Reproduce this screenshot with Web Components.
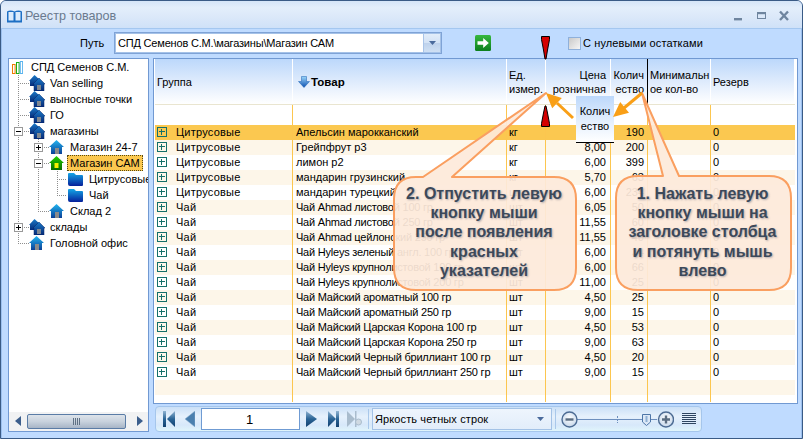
<!DOCTYPE html>
<html lang="ru"><head><meta charset="utf-8"><title>Реестр товаров</title>
<style>html,body{margin:0;padding:0;background:#fff;overflow:hidden}</style></head>
<body>
<app-window>
  <title-bar slot="title">Реестр товаров</title-bar>
  <path-bar slot="bar"></path-bar>
  <tree-panel slot="tree">
    <tree-node icon="bars" w="3">СПД Семенов С.М.</tree-node>
    <tree-node icon="double" w="20" lines="V18 H18-29">Van selling</tree-node>
    <tree-node icon="double" w="20" lines="V18 H18-29">выносные точки</tree-node>
    <tree-node icon="double" w="20" lines="V18 H18-29">ГО</tree-node>
    <tree-node icon="double" w="20" lines="V18 H18-29" exp="minus" ex="18">магазины</tree-node>
    <tree-node icon="house" w="40" lines="V18 V38 H38-49" exp="plus" ex="38">Магазин 24-7</tree-node>
    <tree-node icon="green" w="40" lines="V18 V38 H38-49" exp="minus" ex="38" selected>Магазин САМ</tree-node>
    <tree-node icon="folder" w="59" lines="V18 V38 V57 H57-67">Цитрусовые</tree-node>
    <tree-node icon="folder" w="59" lines="V18 V38 L57 H57-67">Чай</tree-node>
    <tree-node icon="house" w="40" lines="V18 L38 H38-49">Склад 2</tree-node>
    <tree-node icon="double" w="20" lines="V18 H18-29" exp="plus" ex="18">склады</tree-node>
    <tree-node icon="house" w="20" lines="L18 H18-29">Головной офис</tree-node>
  </tree-panel>
  <data-grid slot="grid"></data-grid>
  <pager-bar slot="pager"></pager-bar>
  <tutorial-layer slot="layer"></tutorial-layer>
</app-window>
<script>
const FONT = '"Liberation Sans", Arial, sans-serif';
function shadow(el, css, html){
  const r = el.shadowRoot || el.attachShadow({mode:'open'});
  r.innerHTML = '<style>'+css+'</style>'+html;
  return r;
}
customElements.define('app-window', class extends HTMLElement{
  connectedCallback(){ shadow(this, `
    :host{display:flex;flex-direction:column;position:relative;box-sizing:border-box;width:803px;height:439px;
      border:1px solid #3a5b86;border-radius:6px 6px 0 0;background:#bfdbff;font:11px ${FONT};color:#000;overflow:hidden;
      box-shadow:inset 1px 0 0 #9cc0ee, inset -1px 0 0 #9cc0ee}
    .main{flex:1;display:flex;gap:4px;padding:0 4px 0 7px;min-height:0}
    .right{display:flex;flex-direction:column;gap:2px;width:645px}
    .left{display:flex;width:141px;height:374px}
  `, `<slot name="title"></slot><slot name="bar"></slot>
    <div class="main"><div class="left"><slot name="tree"></slot></div>
    <div class="right"><slot name="grid"></slot><slot name="pager"></slot></div></div>
    <slot name="layer"></slot>`); }
});
customElements.define('title-bar', class extends HTMLElement{
  connectedCallback(){ shadow(this, `
    :host{display:flex;align-items:center;box-sizing:border-box;height:28px;padding:3px 0 0 5px;flex:none;
      background:linear-gradient(#d5e5f8,#e3eefb 25%,#dbe8f9 60%,#cfe1f8);border-bottom:1px solid #a4c7f0;font:12.6px ${FONT};color:#6a7a8e}
    .t{margin-left:2px}
    .btns{margin-left:auto;display:flex;align-items:center;gap:0;padding-right:11px}
    svg{display:block}
  `, `<svg width="17" height="15" viewBox="0 0 17 15"><path d="M1 2.5C3 1 6 1 8.5 2.500C11 1 14 1 16 2.500V13.500H1Z" fill="#1d6fc4"/><rect x="2.500" y="3" width="5" height="8.500" fill="#dcecfc"/><rect x="9.500" y="3" width="5" height="8.500" fill="#dcecfc"/></svg>
    <span class="t"><slot></slot></span>
    <div class="btns"><svg width="60" height="12" viewBox="0 0 60 12">
      <rect x="3" y="8" width="8" height="2.400" fill="#6f859f"/>
      <rect x="26.500" y="2.500" width="8" height="6" fill="none" stroke="#6f859f" stroke-width="1"/><rect x="26" y="2" width="9" height="2.200" fill="#6f859f"/>
      <path d="M49 1.500L57 10M57 1.500L49 10" stroke="#6f859f" stroke-width="2.400" fill="none"/>
    </svg></div>`); }
});
customElements.define('path-bar', class extends HTMLElement{
  connectedCallback(){ shadow(this, `
    :host{display:flex;align-items:center;box-sizing:border-box;height:29px;flex:none;padding:0 0 1px 79px;font:11px ${FONT}}
    .lbl{width:34px}
    .input{box-sizing:border-box;width:328px;height:22px;border:1px solid #7fa3d6;outline:1px solid #a5c2e8;outline-offset:-2px;background:#fff;display:flex;align-items:center;padding-left:3px;white-space:nowrap;overflow:hidden;position:relative}
    .txt{flex:1;letter-spacing:-.017em}
    .dd{width:16px;align-self:stretch;background:linear-gradient(#e2edfa,#d3e2f5 50%,#bed2ec 52%,#cfe0f4);display:flex;align-items:center;justify-content:center;border-left:1px solid #a9c4e8;margin:1px}
    .go{margin-left:33px;display:block}
    .cb{margin-left:77px;box-sizing:border-box;width:13px;height:13px;border:1px solid #8fb0da;background:linear-gradient(135deg,#c9c9c9,#f6f6f6);}
    .cl{margin-left:2px;letter-spacing:.01em;white-space:nowrap}
  `, `<span class="lbl">Путь</span>
    <div class="input"><span class="txt">СПД Семенов С.М.\\магазины\\Магазин САМ</span>
      <span class="dd"><svg width="7" height="4" viewBox="0 0 7 4"><path d="M0 0H7L3.500 4Z" fill="#4a6a9c"/></svg></span></div>
    <svg class="go" width="16" height="16" viewBox="0 0 16 16"><defs><linearGradient id="g" x1="0" y1="0" x2="0" y2="1"><stop offset="0" stop-color="#38b83f"/><stop offset="1" stop-color="#0c7f1e"/></linearGradient></defs><rect width="16" height="16" rx="1.500" fill="url(#g)"/><path d="M2.500 6.300H8.200V3L13.800 8L8.200 13V9.700H2.500Z" fill="#fff"/></svg>
    <span class="cb"></span><span class="cl">С нулевыми остатками</span>`); }
});
customElements.define('tree-panel', class extends HTMLElement{
  connectedCallback(){ shadow(this, `
    :host{display:flex;flex-direction:column;box-sizing:border-box;width:141px;height:374px;border:1px solid #7199d2;background:#fff;overflow:hidden}
    .items{flex:1;min-height:0;overflow:hidden}
    .sb{height:18px;flex:none;background:#f1f2f3;display:flex;align-items:center;padding-bottom:1px}
    svg{display:block;flex:none}
    .l{margin-left:6px}
    .th{margin-left:5px;box-sizing:border-box;width:99px;height:15px;border:1px solid #5a7ca6;border-radius:2px;background:linear-gradient(#dde3ea,#c8d2dd 50%,#a7b5c6);display:flex;align-items:center;justify-content:center}
    .r{margin-left:11px}
  `, `<div class="items"><slot></slot></div>
   <div class="sb"><svg class="l" width="7" height="10" viewBox="0 0 7 10"><path d="M6 0V10L0 5Z" fill="#3c5e8c"/></svg>
   <div class="th"><svg width="8" height="7" viewBox="0 0 8 7"><path d="M.5 0V7M2.500 0V7M4.500 0V7M6.500 0V7" stroke="#5f7184" stroke-width="1"/></svg></div>
   <svg class="r" width="6" height="10" viewBox="0 0 6 10"><path d="M0 0V10L6 5Z" fill="#3c5e8c"/></svg></div>`); }
});
const GRAD = (a,b)=>`<defs><linearGradient id="i" x1="0" y1="0" x2="0" y2="1"><stop offset="0" stop-color="${a}"/><stop offset="1" stop-color="${b}"/></linearGradient></defs>`;
const HOUSE = 'M7.500 1L15 8H13V15H2V8H0Z';
const ICONS = {
  bars:`<svg width="11" height="16" viewBox="0 0 11 16"><rect x=".5" y="5.500" width="2.600" height="9" fill="#fff" stroke="#f07a00"/><rect x="4.500" y="3.500" width="2.600" height="11" fill="#fff" stroke="#19b019"/><rect x="8.300" y="2.500" width="2.300" height="12" fill="#fff" stroke="#5ab4ee"/></svg>`,
  double:`<svg width="16" height="16" viewBox="0 0 16 16">${GRAD('#1a7ac8','#062a78')}<path d="M5.500 0L11 5V11H1V6H0Z" fill="url(#i)"/><path d="M10 3L16 9H15V16H5V9H4Z" fill="url(#i)" stroke="#06256b" stroke-width=".5"/><rect x="8" y="10" width="4" height="5" fill="#7f8790"/></svg>`,
  house:`<svg width="15" height="16" viewBox="0 0 15 16">${GRAD('#22b5f0','#0a3f96')}<path d="${HOUSE}" fill="url(#i)"/><rect x="6" y="9" width="4" height="6" fill="#8b8b8b"/></svg>`,
  green:`<svg width="15" height="16" viewBox="0 0 15 16">${GRAD('#22d000','#066b00')}<path d="${HOUSE}" fill="url(#i)"/><rect x="5.500" y="8" width="4" height="5" fill="#f6f000"/></svg>`,
  folder:`<svg width="15" height="16" viewBox="0 0 15 16">${GRAD('#14a6e6','#06209a')}<path d="M1 2H6L8 4H14Q15 4 15 5V14Q15 15 14 15H2Q0 15 0 13V3Q0 2 1 2Z" fill="url(#i)"/></svg>`
};
function guides(spec, exp, ex){
  let s='';
  (spec||'').split(' ').filter(Boolean).forEach(t=>{
    const k=t[0], v=t.slice(1);
    if(k==='V'){const x=+v-9+.5; s+=`<path d="M${x} 0V16"/>`;}
    if(k==='L'){const x=+v-9+.5; s+=`<path d="M${x} 0V8"/>`;}
    if(k==='H'){const [a,b]=v.split('-').map(n=>+n-9); s+=`<path d="M${a} 8.500H${b}"/>`;}
  });
  let e='';
  if(exp){const c=+ex-9; e=`<rect x="${c-4+.5}" y="4.500" width="8" height="8" fill="#fff" stroke="#999"/><path d="M${c-2} 8.500H${c+3}" stroke="#000"/>`+(exp==='plus'?`<path d="M${c+.5} 6V11" stroke="#000"/>`:'');}
  return `<g fill="none" stroke="#8e8e8e" stroke-dasharray="1 1" shape-rendering="crispEdges">${s}</g><g shape-rendering="crispEdges">${e}</g>`;
}
customElements.define('tree-node', class extends HTMLElement{
  connectedCallback(){
    const w=+this.getAttribute('w')||0, ic=this.getAttribute('icon');
    const sel=this.hasAttribute('selected');
    const gap = ic==='bars'?8: ic==='double'?5: 6;
    shadow(this, `
      :host{display:flex;align-items:center;height:16px;white-space:nowrap;font:11px ${FONT}}
      svg{display:block;flex:none}
      .lab{margin-left:${sel?3:gap}px;${sel?'box-sizing:border-box;height:16px;line-height:14px;padding:0 2px;background:#fbc850;border:1px dotted #5a4a10;':''}}
    `, `<svg width="${w}" height="16" viewBox="0 0 ${w} 16">${guides(this.getAttribute('lines'),this.getAttribute('exp'),this.getAttribute('ex'))}</svg>${ICONS[ic]}<span class="lab"><slot></slot></span>`);
  }
});
const ROWS = [
 ['Цитрусовые','Апельсин марокканский','кг','','190','0'],
 ['Цитрусовые','Грейпфрут р3','кг','8,00','200','0'],
 ['Цитрусовые','лимон р2','кг','6,00','399','0'],
 ['Цитрусовые','мандарин грузинский','кг','5,70','63','0'],
 ['Цитрусовые','мандарин турецкий','шт','6,00','234','0'],
 ['Чай','Чай Ahmad листовой 100 гр','шт','6,05','50','0'],
 ['Чай','Чай Ahmad листовой 250 гр','шт','11,55','60','0'],
 ['Чай','Чай Ahmad цейлонский 250 гр','шт','11,55','40','0'],
 ['Чай','Чай Hyleys зеленый англ. 100 гр','шт','6,00','34','0'],
 ['Чай','Чай Hyleys крупнолистовой 100 гр','шт','6,00','66','0'],
 ['Чай','Чай Hyleys крупнолистовой 200 гр','шт','11,00','25','0'],
 ['Чай','Чай Майский ароматный 100 гр','шт','4,50','25','0'],
 ['Чай','Чай Майский ароматный 250 гр','шт','9,00','15','0'],
 ['Чай','Чай Майский Царская Корона 100 гр','шт','4,50','53','0'],
 ['Чай','Чай Майский Царская Корона 250 гр','шт','9,00','63','0'],
 ['Чай','Чай Майский Черный бриллиант 100 гр','шт','4,50','20','0'],
 ['Чай','Чай Майский Черный бриллиант 250 гр','шт','9,00','15','0'],
 ['','','','','','']
];
customElements.define('grid-row', class extends HTMLElement{
  connectedCallback(){
    const c=JSON.parse(this.getAttribute('cells'));
    const h=this.getAttribute('h')||15;
    const exp = c[0]?`<svg width="10" height="10" viewBox="0 0 10 10"><rect x=".5" y=".5" width="9" height="9" fill="none" stroke="#14706a" shape-rendering="crispEdges"/><path d="M2 4.500H8M4.500 2V8" stroke="#14706a" shape-rendering="crispEdges"/></svg>`:'';
    const tight = c[0]==='Чай' ? 'letter-spacing:-.02em;' : '';
    shadow(this, `
      :host{display:grid;grid-template-columns:var(--cols);height:${h}px;background:${this.getAttribute('bg')||'#fff'};font:11px ${FONT}}
      div{box-sizing:border-box;border-right:1px solid #fcc64f;padding:0 3px 1px;white-space:nowrap;overflow:hidden;display:flex;align-items:center;height:${h}px}
      div:last-child{border-right:0}
      .g{padding-left:2px;letter-spacing:.02em}
      .g svg{margin-right:9px;flex:none;display:block}
      .n{justify-content:flex-end}
    `, `<div class="g">${exp}${c[0]}</div><div style="${tight}">${c[1]}</div><div style="padding-left:2px">${c[2]}</div><div class="n" style="padding-right:4px">${c[3]}</div><div class="n">${c[4]}</div><div></div><div style="padding-left:2px">${c[5]}</div>`);
  }
});
customElements.define('header-cell', class extends HTMLElement{
  connectedCallback(){
    const a=this.getAttribute('align')||'left';
    const pl=this.getAttribute('pl')||2, pr=this.getAttribute('pr')||3;
    shadow(this, `
      :host{display:flex;align-items:center;box-sizing:border-box;height:45px;padding:0 ${pr}px 0 ${pl}px;border-right:1px solid ${this.hasAttribute('mark')?'#000':'#fff'};
        justify-content:${a==='right'?'flex-end':'flex-start'};text-align:${a};line-height:14px;white-space:nowrap;overflow:hidden}
    `,`<span><slot></slot></span>`);
  }
});
customElements.define('data-grid', class extends HTMLElement{
  connectedCallback(){
    const arrow=`<svg width="12" height="12" viewBox="0 0 12 12" style="vertical-align:-2px;margin-right:1px"><defs><linearGradient id="a" x1="0" y1="0" x2="0" y2="1"><stop offset="0" stop-color="#9bd6fb"/><stop offset="1" stop-color="#0b4fb0"/></linearGradient></defs><path d="M3.500 .5H8.500V5.500H11.500L6 11.500L.5 5.500H3.500Z" fill="url(#a)" stroke="#1a5fb0" stroke-width=".5"/></svg>`;
    const esc=s=>s.replace(/"/g,'&quot;');
    const rows=ROWS.map((r,i)=>`<grid-row bg="${i===0?'#fbc850':(i%2?'#fdf6e9':'#fff')}" cells="${esc(JSON.stringify(r))}"></grid-row>`).join('');
    shadow(this, `
      :host{display:block;box-sizing:border-box;width:645px;height:346px;border:1px solid #7199d2;background:#fff;padding:0 2px 0 1px;
        --cols:138px 214px 39px 65px 37px 63px 84px;font:11px ${FONT}}
      .head{display:grid;grid-template-columns:var(--cols);height:46px;box-sizing:border-box;border-bottom:1px solid #e9e5d0;background:linear-gradient(#bcd8fb,#dbe9fc 45%,#fff)}
      b{font-size:11.5px}
    `, `<div class="head">
        <header-cell>Группа</header-cell>
        <header-cell pl="5">${arrow}<b>Товар</b></header-cell>
        <header-cell>Ед.<br>измер.</header-cell>
        <header-cell align="right" pr="4">Цена<br>розничная</header-cell>
        <header-cell align="right" mark>Колич<br>ество</header-cell>
        <header-cell>Минимальн<br>ое кол-во</header-cell>
        <header-cell>Резерв</header-cell>
      </div>
      <grid-row h="20" cells='["","","","","",""]'></grid-row>
      ${rows}
      <grid-row h="7" cells='["","","","","",""]'></grid-row>`);
  }
});
customElements.define('pager-bar', class extends HTMLElement{
  connectedCallback(){
    const g=`<defs><linearGradient id="p" x1="0" y1="0" x2="0" y2="1"><stop offset="0" stop-color="#8fb3d2"/><stop offset=".5" stop-color="#2a6496"/><stop offset="1" stop-color="#12406f"/></linearGradient></defs>`;
    shadow(this, `
      :host{display:flex;align-items:center;box-sizing:border-box;width:547px;height:26px;margin-left:2px;padding-left:7px;border:1px solid #a5c6ec;border-radius:4px;
        background:linear-gradient(#cbe0f7,#e6f1fc 40%,#d7e8fa 75%,#e0f5fb);font:11px ${FONT}}
      svg{display:block;flex:none}
      .box{box-sizing:border-box;height:22px;border:1px solid #6f9bd3;background:#fff;display:flex;align-items:center;flex:none}
      .page{width:99px;margin:0 6px;justify-content:center;font-size:13px;padding-right:2px}
      .sep{width:1px;height:20px;background:#a9c8ea;flex:none}
      .combo{width:180px;margin:0 3px;padding-left:2px;border-color:#a3c2e6;background:linear-gradient(#eef5fd,#e2edfa);letter-spacing:.01em}
      .combo span{flex:1}
      .combo svg{margin-right:7px}
    `, `
    <svg width="12" height="16" viewBox="0 0 12 16">${g}<rect width="3" height="16" fill="url(#p)"/><path d="M12 0V16L4 8Z" fill="url(#p)"/></svg>
    <svg style="margin-left:10px" width="10" height="16" viewBox="0 0 10 16"><path d="M10 0V16L0 8Z" fill="#4a7fae" stroke="#8fb3d2" stroke-width=".5"/></svg>
    <div class="box page">1</div>
    <svg width="11" height="16" viewBox="0 0 11 16">${g}<path d="M0 0V16L11 8Z" fill="url(#p)"/></svg>
    <svg style="margin-left:11px" width="11" height="16" viewBox="0 0 11 16">${g}<path d="M0 0V16L8 8Z" fill="url(#p)"/><rect x="8" width="3" height="16" fill="url(#p)"/></svg>
    <svg style="margin:0 6px 0 8px" width="15" height="16" viewBox="0 0 15 16"><path d="M0 0V16L8 8Z" fill="#a9bccd"/><rect x="8" width="1.500" height="16" fill="#a9bccd"/><circle cx="11.500" cy="11" r="3" fill="#cfd9e2" stroke="#a9bccd"/></svg>
    <div class="sep"></div>
    <div class="box combo"><span>Яркость четных строк</span><svg width="7" height="4" viewBox="0 0 7 4"><path d="M0 0H7L3.500 4Z" fill="#4a6a9c"/></svg></div>
    <div class="sep"></div>
    <svg style="margin-left:5px" width="113" height="18" viewBox="0 0 113 18">
      <defs><radialGradient id="b" cx=".5" cy=".4" r=".7"><stop offset="0" stop-color="#fff"/><stop offset="1" stop-color="#bcd0e6"/></radialGradient></defs>
      <path d="M16 9.500H96" stroke="#6d8fbe"/><path d="M56.500 6V13" stroke="#6d8fbe" stroke-dasharray="2 1"/>
      <path d="M81.500 4.500H89.500V12L85.500 15.500L81.500 12Z" fill="#dce8f6" stroke="#4e76a8"/><rect x="84.500" y="6" width="2" height="6" fill="#8fb0d4"/>
      <circle cx="8.500" cy="9.500" r="7.500" fill="url(#b)" stroke="#4d6c94" stroke-width="1.400"/><path d="M4.500 9.500H12.500" stroke="#5a6c80" stroke-width="2.400"/>
      <circle cx="105" cy="9.500" r="7.500" fill="url(#b)" stroke="#4d6c94" stroke-width="1.400"/><path d="M101 9.500H109M105 5.500V13.500" stroke="#5a6c80" stroke-width="2.400"/>
    </svg>
    <svg style="margin-left:8px" width="14" height="12" viewBox="0 0 14 12"><path d="M0 .5H14M0 2.500H14M0 4.500H14M0 6.500H14M0 8.500H14M0 10.500H14" stroke="#2f4560"/></svg>`);
  }
});
customElements.define('drag-ghost', class extends HTMLElement{
  connectedCallback(){ shadow(this, `
    :host{position:absolute;left:576px;top:96px;width:38px;height:47px;box-sizing:border-box;border-bottom:1px solid #000;
      background:linear-gradient(#bcd8fb,#e4effd 55%,#fff);display:flex;align-items:center;justify-content:center;text-align:center;font:11px/15px ${FONT}}
  `,`<span><slot></slot></span>`); }
});
customElements.define('call-out', class extends HTMLElement{
  connectedCallback(){ shadow(this, `
    :host{position:absolute;left:${this.getAttribute('x')}px;top:184px;width:${this.getAttribute('w')}px;text-align:center;
      font:bold 16px/19.2px ${FONT};color:#3c495a;text-shadow:1px 1px 2px rgba(90,90,110,.45);white-space:nowrap}
  `,`<slot></slot>`); }
});
customElements.define('tutorial-layer', class extends HTMLElement{
  connectedCallback(){
    const s='fill="#fde9da" fill-opacity=".93" stroke="#fa9f60" stroke-width="2" stroke-linejoin="round"';
    shadow(this, `
      :host{position:absolute;left:-1px;top:-1px;width:803px;height:439px;pointer-events:none;display:block}
      svg{position:absolute;left:0;top:0}
    `, `
    <drag-ghost>Колич<br>ество</drag-ghost>
    <svg width="803" height="439" viewBox="0 0 803 439">
      <path d="M416 177H423L546 93L452 177H554Q576 177 576 199V268Q576 290 554 290H416Q394 290 394 268V199Q394 177 416 177Z" ${s}/>
      <path d="M638 176H663L642 93L679 176H769Q791 176 791 198V268Q791 290 769 290H638Q616 290 616 268V198Q616 176 638 176Z" ${s}/>
      <g fill="#d40000" stroke="#000" stroke-width="1">
        <path d="M541.500 36.500H549.500V39.500L547.500 50L546 59H545L543.500 50L541.500 39.500Z"/>
        <path d="M541.500 126.500H549.500V123.500L547.500 113L546 106H545L543.500 113L541.500 123.500Z"/>
      </g>
      <g fill="#f99f16" stroke="none">
        <path d="M573 118L557 103" stroke="#f99f16" stroke-width="3" fill="none"/>
        <path d="M546 93L561.800 98.100L552.200 108.300Z"/>
        <path d="M642 93L624 108" stroke="#f99f16" stroke-width="3" fill="none"/>
        <path d="M613 117L629 112.800L620.200 102Z"/>
      </g>
    </svg>
    <call-out x="393" w="182">2. Отпустить левую<br>кнопку мыши<br>после появления<br>красных<br>указателей</call-out>
    <call-out x="615" w="175">1. Нажать левую<br>кнопку мыши на<br>заголовке столбца<br>и потянуть мышь<br>влево</call-out>`);
  }
});
</script>
</body></html>
